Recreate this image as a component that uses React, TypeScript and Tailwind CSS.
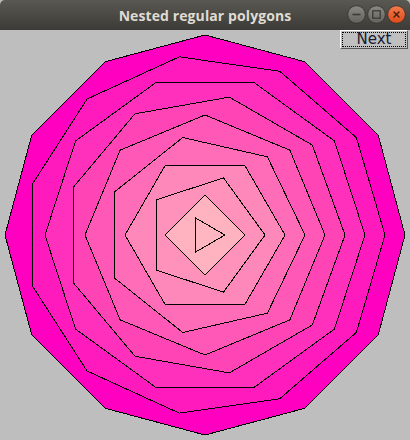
import React from "react";

function poly(n: number, r: number, cx: number, cy: number) {
  const pts: string[] = [];
  for (let i = 0; i < n; i++) {
    const a = (2 * Math.PI * i) / n;
    pts.push(`${(cx + r * Math.cos(a)).toFixed(2)},${(cy - r * Math.sin(a)).toFixed(2)}`);
  }
  return pts.join(" ");
}

const COLORS: Record<number, string> = {
  3: "#ffb6c1",
  4: "#ffb3c0",
  5: "#ff92bb",
  6: "#ff88ba",
  7: "#ff6cb7",
  8: "#ff58b6",
  9: "#ff44b6",
  10: "#ff30bb",
  11: "#ff1abe",
  12: "#ff00c0",
};

function WinBtn({ kind }: { kind: "min" | "max" | "close" }) {
  const isClose = kind === "close";
  return (
    <svg width="19" height="19" viewBox="0 0 19 19">
      <defs>
        <linearGradient id={`g-${kind}`} x1="0" y1="0" x2="0" y2="1">
          <stop offset="0" stopColor={isClose ? "#f47a4c" : "#8a8984"} />
          <stop offset="1" stopColor={isClose ? "#de4a1a" : "#63625d"} />
        </linearGradient>
      </defs>
      <circle cx="9.5" cy="9.5" r="8.8" fill={`url(#g-${kind})`} stroke="#33322e" strokeWidth="0.8" />
      {kind === "min" && <line x1="5.5" y1="9.5" x2="13.5" y2="9.5" stroke="#3c3b37" strokeWidth="1.6" />}
      {kind === "max" && <rect x="5.8" y="5.8" width="7.4" height="7.4" fill="none" stroke="#3c3b37" strokeWidth="1.3" />}
      {kind === "close" && (
        <g stroke="#4a2010" strokeWidth="1.5" strokeLinecap="round">
          <line x1="7" y1="7" x2="12" y2="12" />
          <line x1="12" y1="7" x2="7" y2="12" />
        </g>
      )}
    </svg>
  );
}

export default function App() {
  const ns = [12, 11, 10, 9, 8, 7, 6, 5, 4, 3];
  return (
    <div className="w-[410px] h-[440px] flex flex-col bg-[#bebebe] overflow-hidden">
      <div className="relative h-[30px] flex items-center justify-center rounded-t-[5px] bg-gradient-to-b from-[#595852] to-[#3c3b37]">
        <span
          className="text-[14px] font-bold text-[#dfdbd2] tracking-[0.1px]"
          style={{ fontFamily: '"Open Sans", "DejaVu Sans", sans-serif' }}
        >
          Nested regular polygons
        </span>
        <div className="absolute right-[4px] top-[5px] flex gap-[1px]">
          <WinBtn kind="min" />
          <WinBtn kind="max" />
          <WinBtn kind="close" />
        </div>
      </div>
      <div className="relative w-[410px] h-[410px]">
        <svg width="410" height="410" viewBox="0 0 410 410" shapeRendering="crispEdges">
          {ns.map((n) => (
            <polygon key={n} points={poly(n, 20 * (n - 2), 205, 205)} fill={COLORS[n]} stroke="#000" strokeWidth="1" />
          ))}
        </svg>
        <button
          className="absolute left-[340px] top-0 w-[68px] h-[19px] bg-[#c0c0c0] border border-t-white border-l-white border-r-[#5a5a5a] border-b-[#5a5a5a] flex items-center justify-center p-0"
        >
          <span className="absolute inset-[1px] border border-dotted border-black" />
          <span
            className="text-[15px] leading-none text-[#1a1a30]"
            style={{ fontFamily: '"DejaVu Sans", sans-serif' }}
          >
            Next
          </span>
        </button>
      </div>
    </div>
  );
}
